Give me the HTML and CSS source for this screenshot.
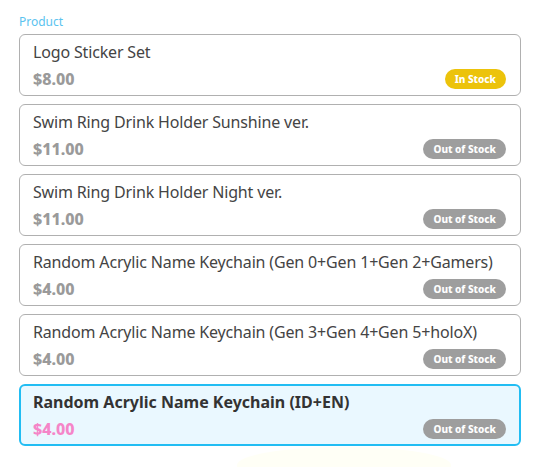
FILE: index.html
```html
<!DOCTYPE html>
<html>
<head>
<meta charset="utf-8">
<link rel="stylesheet" href="styles.css">
</head>
<body>
<div class="page">
  <div class="label">Product</div>
  <div class="list">
    <div class="card">
      <div class="title">Logo Sticker Set</div>
      <div class="row"><span class="price">$8.00</span><span class="badge in">In Stock</span></div>
    </div>
    <div class="card">
      <div class="title">Swim Ring Drink Holder Sunshine ver.</div>
      <div class="row"><span class="price">$11.00</span><span class="badge out">Out of Stock</span></div>
    </div>
    <div class="card">
      <div class="title">Swim Ring Drink Holder Night ver.</div>
      <div class="row"><span class="price">$11.00</span><span class="badge out">Out of Stock</span></div>
    </div>
    <div class="card">
      <div class="title">Random Acrylic Name Keychain (Gen 0+Gen 1+Gen 2+Gamers)</div>
      <div class="row"><span class="price">$4.00</span><span class="badge out">Out of Stock</span></div>
    </div>
    <div class="card">
      <div class="title">Random Acrylic Name Keychain (Gen 3+Gen 4+Gen 5+holoX)</div>
      <div class="row"><span class="price">$4.00</span><span class="badge out">Out of Stock</span></div>
    </div>
    <div class="card selected">
      <div class="title">Random Acrylic Name Keychain (ID+EN)</div>
      <div class="row"><span class="price">$4.00</span><span class="badge out">Out of Stock</span></div>
    </div>
  </div>
  <div class="glow"></div>
</div>
</body>
</html>
```
FILE: styles.css
```css
html, body {
  margin: 0;
  padding: 0;
  background: #ffffff;
}
body {
  font-family: "Noto Sans", "DejaVu Sans", sans-serif;
  overflow: hidden;
  height: 467px;
}
.page {
  width: 502px;
  padding: 14px 0 0 19px;
}
.label {
  font-size: 12px;
  line-height: 16px;
  color: #5bc3ef;
  margin-bottom: 4px;
}
.list {
  display: flex;
  flex-direction: column;
  gap: 8px;
}
.card {
  border: 1px solid #b0b0b0;
  border-radius: 6px;
  padding: 6px 14px 5px 13px;
  display: flex;
  flex-direction: column;
  gap: 5px;
}
.title {
  font-size: 16px;
  line-height: 22px;
  color: #444444;
  letter-spacing: -0.16px;
  white-space: nowrap;
}
.row {
  display: flex;
  align-items: center;
  justify-content: space-between;
  height: 22px;
}
.price {
  font-size: 16px;
  font-weight: 800;
  color: #9a9a9a;
}
.badge {
  height: 20px;
  line-height: 20px;
  border-radius: 10px;
  padding: 0 10px;
  font-size: 10px;
  font-weight: 800;
  color: #ffffff;
}
.badge.in { background: #ecc30b; }
.badge.out { background: #9e9e9e; }
.card.selected {
  border: 2px solid #22bdf3;
  background: #eaf8ff;
  padding: 5px 13px 4px 12px;
}
.card.selected .title {
  font-weight: bold;
  color: #333333;
  letter-spacing: 0;
}
.card.selected .price {
  color: #f585c8;
}
.glow {
  width: 214px;
  height: 30px;
  margin: 1px 0 0 218px;
  background: #fffff6;
  border-radius: 50% 50% 0 0 / 60% 60% 0 0;
}
```
